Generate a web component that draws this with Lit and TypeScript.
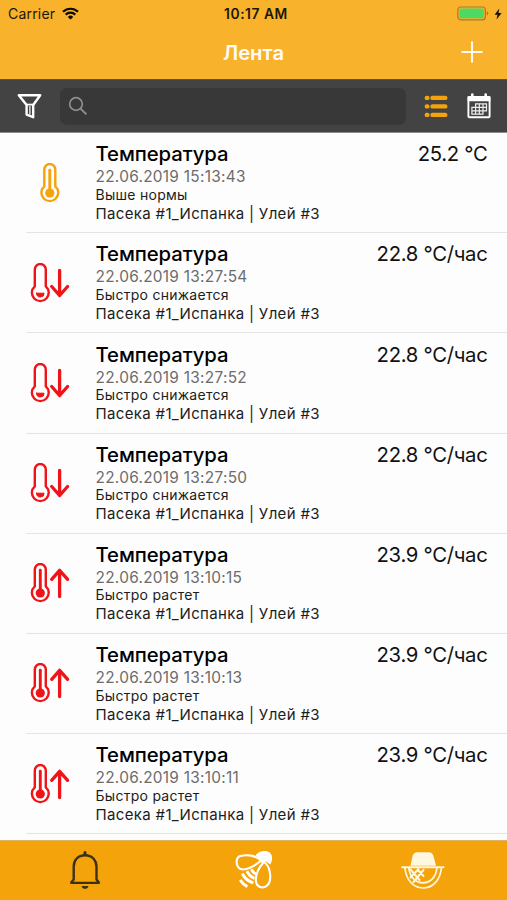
import { LitElement, html, css, svg } from "lit";
import { customElement, property } from "lit/decorators.js";

type Trend = "high" | "down" | "up";
interface Entry { date: string; note: string; value: string; trend: Trend; }

const ENTRIES: Entry[] = [
  { date: "22.06.2019 15:13:43", note: "Выше нормы", value: "25.2 °C", trend: "high" },
  { date: "22.06.2019 13:27:54", note: "Быстро снижается", value: "22.8 °C/час", trend: "down" },
  { date: "22.06.2019 13:27:52", note: "Быстро снижается", value: "22.8 °C/час", trend: "down" },
  { date: "22.06.2019 13:27:50", note: "Быстро снижается", value: "22.8 °C/час", trend: "down" },
  { date: "22.06.2019 13:10:15", note: "Быстро растет", value: "23.9 °C/час", trend: "up" },
  { date: "22.06.2019 13:10:13", note: "Быстро растет", value: "23.9 °C/час", trend: "up" },
  { date: "22.06.2019 13:10:11", note: "Быстро растет", value: "23.9 °C/час", trend: "up" },
];

@customElement("feed-row")
class FeedRow extends LitElement {
  @property({ attribute: false }) entry!: Entry;

  static styles = css`
    :host { display: flex; box-sizing: border-box; height: 100.2px; flex: none; }
    .icon { width: 95.5px; flex: none; display: flex; justify-content: center; padding-top: 29.5px; box-sizing: border-box; }
    .icon svg { width: 40px; height: 41px; margin-left: 4px; }
    .body { flex: 1; display: flex; flex-direction: column; padding-top: 9.3px; white-space: nowrap; position: relative; }
    .top { display: flex; justify-content: space-between; padding-right: 19.5px; height: 25px; line-height: 24px; color: #111; }
    .title { font-size: 20.3px; font-weight: 500; letter-spacing: -0.08px; color: #000; }
    .value { font-size: 20.3px; letter-spacing: -0.3px; }
    .date { font-size: 15.4px; line-height: 20px; height: 18.4px; color: #6c6c6c; letter-spacing: 0.28px; }
    .note { font-size: 14px; line-height: 18px; height: 18px; color: #1c1c1c; letter-spacing: 0.27px; }
    .place { font-size: 15px; line-height: 19px; height: 19px; color: #1c1c1c; letter-spacing: 0.34px; }
    .rule { position: absolute; left: -69.5px; right: 0; bottom: 0; height: 1px; background: #e4e4e4; }
  `;

  private picture(t: Trend) {
    const color = t === "high" ? "#f5a30a" : "#ee1418";
    const dx = t === "high" ? 9.5 : 0;
    return html`<svg viewBox="0 0 40 41" fill="none" stroke=${color} stroke-width="2.4" stroke-linecap="round" stroke-linejoin="round">
      <g transform="translate(${dx} 0)">
        <path d="M4.8 23.4V6.5a5.5 5.5 0 0 1 11 0V23.4a8.4 8.4 0 1 1-11 0Z" />
        ${t === "down"
          ? svg`<path d="M6.5 30.2h7.6a3.8 3.8 0 0 1-7.6 0Z" fill=${color} stroke-width="1" />`
          : svg`<path d="M10.3 7.2V29" stroke-width="2.9" /><circle cx="10.3" cy="30" r="4.6" fill=${color} stroke="none" />`}
      </g>
      ${t === "down" ? svg`<path d="M29.6 7.3V32.5M21.7 23.5l7.9 9 8-9" stroke-width="3.3" />` : ""}
      ${t === "up" ? svg`<path d="M29.6 33.5V7.5M21.7 16.3l7.9-9 8 9" stroke-width="3.3" />` : ""}
    </svg>`;
  }

  render() {
    const e = this.entry;
    return html`
      <div class="icon">${this.picture(e.trend)}</div>
      <div class="body">
        <div class="top"><span class="title">Температура</span><span class="value">${e.value}</span></div>
        <div class="date">${e.date}</div>
        <div class="note">${e.note}</div>
        <div class="place">Пасека #1_Испанка | Улей #3</div>
        <div class="rule"></div>
      </div>`;
  }
}

@customElement("app-root")
class AppRoot extends LitElement {
  static styles = css`
    :host { display: flex; flex-direction: column; width: 507px; height: 900px; overflow: hidden; background: #fdfdfd; font-family: Inter, "Liberation Sans", sans-serif; }
    svg { display: block; flex: none; }
    .status { display: grid; grid-template-columns: 1fr auto 1fr; align-items: center; height: 27px; flex: none; background: #f8b22c; color: #1c1607; font-size: 14px; padding: 0 5px 0 8px; }
    .carrier { display: flex; align-items: center; gap: 7px; letter-spacing: 0.2px; }
    .clock { font-weight: 600; font-size: 13.8px; letter-spacing: 0.55px; margin-left: 2px; }
    .power { display: flex; justify-content: flex-end; align-items: center; gap: 5px; }
    .nav { display: grid; grid-template-columns: 1fr auto 1fr; align-items: center; height: 52px; flex: none; background: #f8b22c; color: #fffdf5; padding: 0 24px; box-sizing: border-box; }
    .heading { grid-column: 2; font-weight: 600; font-size: 20.3px; line-height: 24px; padding-bottom: 1px; }
    .add { justify-self: end; margin-bottom: 2px; }
    .tools { display: flex; align-items: center; height: 54px; flex: none; box-sizing: border-box; background: #434343; border-top: 1px solid #665129; border-bottom: 1px solid #8c8c8c; padding: 0 15px 0 17px; }
    .search { display: flex; align-items: center; width: 346px; height: 37px; margin: 0 18px 0 18px; border-radius: 7px; background: #383839; padding-left: 8px; box-sizing: border-box; }
    .calendar { margin-left: 19px; }
    .list { flex: 1; min-height: 0; display: flex; flex-direction: column; overflow: hidden; }
    .tabs { display: grid; grid-template-columns: repeat(3, 1fr); justify-items: center; height: 60px; flex: none; box-sizing: border-box; background: #f5a30a; border-top: 1px solid #dcb363; padding-top: 9px; }
  `;

  render() {
    return html`
      <div class="status">
        <div class="carrier"><span>Carrier</span>
          <svg width="17" height="13" viewBox="0 0 17 13" fill="none" stroke="#0d0a02" stroke-width="2.2">
            <path d="M1 4.8a10.7 10.7 0 0 1 15 0M3.7 7.6a6.8 6.8 0 0 1 9.6 0" />
            <path d="M8.5 12.6 5.8 9.9a3.9 3.9 0 0 1 5.4 0Z" fill="#0d0a02" stroke="none" />
          </svg>
        </div>
        <span class="clock">10:17 AM</span>
        <div class="power">
          <svg width="32" height="15" viewBox="0 0 32 15">
            <rect x=".8" y="1" width="27.6" height="12.8" rx="3" fill="none" stroke="#a87d22" stroke-width="1.2" />
            <rect x="2.4" y="2.6" width="24.4" height="9.6" rx="1.6" fill="#4cd964" />
            <path d="M29.8 5.3q1.5.6 1.5 2.1t-1.5 2.1Z" fill="#a87d22" />
          </svg>
          <svg width="8" height="12" viewBox="0 0 8 12"><path d="M5.3.4.6 6.7h2.9L2.5 11.6 7.6 5.1H4.5Z" fill="#15100a" /></svg>
        </div>
      </div>
      <div class="nav">
        <span class="heading">Лента</span>
        <svg class="add" width="22" height="22" viewBox="0 0 22 22" stroke="#fffdf5" stroke-width="2"><path d="M11 .5V21.5M.5 11H21.5" /></svg>
      </div>
      <div class="tools">
        <svg width="25" height="26" viewBox="0 0 25 26" fill="none" stroke="#fff" stroke-width="2.4" stroke-linejoin="round">
          <path d="M1.8 2.2H23.2L16.2 12V24.2l-6.6-2.6V12Z" />
          <path d="M9.6 11.6H16" stroke-width="1.8" /><path d="M12.9 13v8.5" stroke-width="1.2" />
        </svg>
        <div class="search">
          <svg width="20" height="20" viewBox="0 0 20 20" fill="none" stroke="#8e8e90"><circle cx="8" cy="8" r="6.3" stroke-width="1.7" /><path d="m12.6 12.6 5.8 5.8" stroke-width="2" /></svg>
        </div>
        <svg width="24" height="23" viewBox="0 0 24 23" fill="none" stroke="#f5a30a" stroke-width="4.4" stroke-linecap="round">
          <path d="M8.5 2.9H21.3M8.5 11.4H21.3M8.5 19.9H21.3" />
          <path d="M2.8 2.9H3.4M2.8 11.4H3.4M2.8 19.9H3.4" />
        </svg>
        <svg class="calendar" width="24" height="26" viewBox="0 0 24 26">
          <rect x="1.4" y="4" width="21.2" height="20.2" rx="1" fill="none" stroke="#fff" stroke-width="1.9" />
          <path d="M.6 3.3H4V1.5a1.3 1.3 0 0 1 2.6 0V3.3H17.4V1.5a1.3 1.3 0 0 1 2.6 0V3.3h3.4V8.2H.6Z" fill="#fff" />
          <path d="M8 10.9H20M4.3 14.4H20M4.3 17.8H20M4.3 21.2H16.5M4.9 14V21.5M8.6 10.6V21.5M12.3 10.6V21.5M16 10.6V21.5M19.5 10.6V18" stroke="#ededed" stroke-width="1.2" fill="none" />
        </svg>
      </div>
      <div class="list">${ENTRIES.map((e) => html`<feed-row .entry=${e}></feed-row>`)}</div>
      <div class="tabs">
        <svg width="32" height="40" viewBox="0 0 32 40" fill="none" stroke="#3b3213" stroke-width="2.4" stroke-linecap="round" stroke-linejoin="round">
          <path d="M2.4 32.9H29.7V32.3L27.5 29.5V16.7C27.5 10 23 5.3 16 5.3S4.7 10 4.7 16.7V29.5L2.4 32.3Z" />
          <path d="M16 2.4V4.5" stroke-width="3" /><path d="M12.5 35.9H19.5Q18.9 38.7 16 38.7T12.5 35.9Z" fill="#3b3213" stroke="none" />
        </svg>
        <svg width="38" height="40" viewBox="0 0 38 40" fill="none" stroke="#fff" stroke-width="2.1" stroke-linejoin="round">
          <path d="M20.5 5.3C24 .6 31.5-.4 35 2.8c3 3 2.6 7.8 .2 11.8l-4.2-3-4.2 1.6Z" fill="#fff" stroke="none" />
          <path d="M26 10.6C21 5.1 11 4.4 5.2 6.1 1 7.6.8 13.1 3 16.8c2.2 3.5 7.5 3 12.5.7 4.5-2 8-4.5 10.5-6.9Z" />
          <path d="M28.9 12C23.5 18 20.2 25.6 21 31.6c.7 5.2 5.6 6.9 9.5 5 4.8-2.5 5.3-8.7 4.3-14.5-.7-4.2-2.8-8-5.9-10.1Z" />
          <path d="M16.5 19.2q1.5 3.7 4.5 4.7M12 21.1q2.3 5.3 7.5 7.2M7.2 23.5q3.5 7 11.2 9.4M5.2 30q2.7 4.4 7.2 6.6" stroke-width="3" />
        </svg>
        <svg width="44" height="40" viewBox="0 0 44 40" fill="none" stroke="#fff8df" stroke-width="1.7" stroke-linecap="round">
          <path d="M9.5 15.8 11.5 6q1-3.8 5-3.8H27.5q4 0 5 3.8l2.5 9.8Z" fill="#fff8df" stroke="none" />
          <path d="M1.2 17.2H42.5" stroke-width="2" />
          <path d="M4 18C5 29.5 12 38 22 38S39.5 29.5 40.3 18M7.8 18C9 26 13.5 32.8 22 32.8S35 26 36 18" stroke-width="1.7" />
          <path d="m9.5 19.5 9 10.5M17.5 19 9.5 27.5M17 20l5.5 6M22.5 20 12.5 32" stroke-width="2" />
        </svg>
      </div>`;
  }
}
